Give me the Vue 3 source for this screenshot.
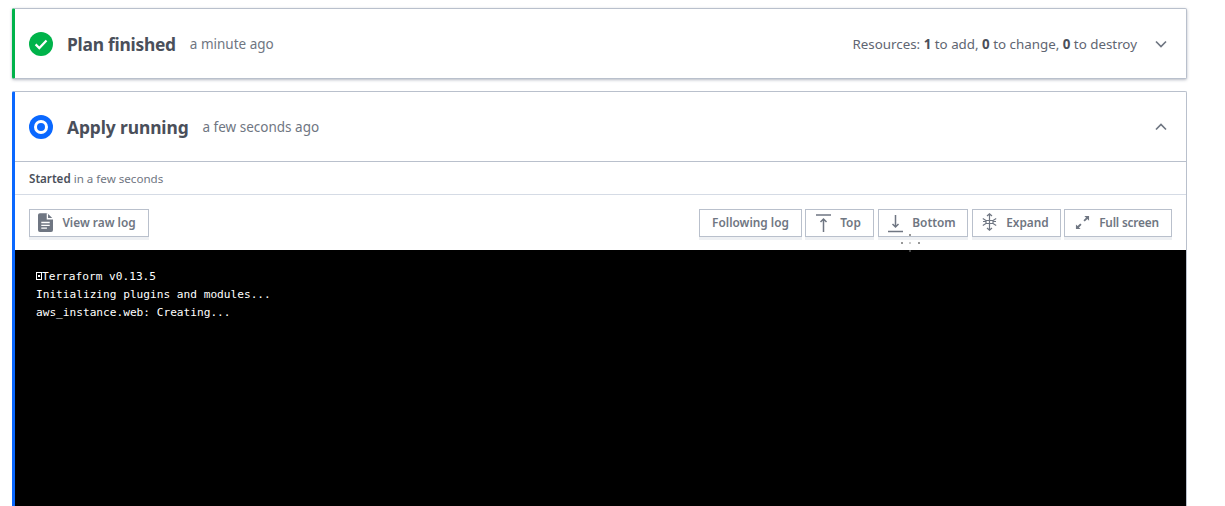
<script setup>
const buttons = [
  { label: 'Following log', width: 103, icon: '' },
  { label: 'Top', width: 69, icon: 'top' },
  { label: 'Bottom', width: 90, icon: 'bottom' },
  { label: 'Expand', width: 89, icon: 'expand' },
  { label: 'Full screen', width: 108, icon: 'full' },
]
</script>

<template>
  <div class="page">
    <section class="card plan">
      <header class="head">
        <svg class="status" width="24" height="24" viewBox="0 0 24 24">
          <circle cx="12" cy="12" r="12" fill="#00b34a" />
          <path d="M6.600 12.400l3.700 3.700 7.200-7.600" fill="none" stroke="#fff" stroke-width="2.200" />
        </svg>
        <h2 class="title title-plan">Plan finished</h2>
        <span class="ago">a minute ago</span>
        <span class="resources">Resources: <b>1</b> to add, <b>0</b> to change, <b>0</b> to destroy</span>
        <svg class="chev" width="12" height="8" viewBox="0 0 12 8">
          <path d="M1 1.500l5 5 5-5" fill="none" stroke="#6f7682" stroke-width="1.700" />
        </svg>
      </header>
    </section>

    <section class="card apply">
      <header class="head head-apply">
        <svg class="status" width="24" height="24" viewBox="0 0 24 24">
          <circle cx="12" cy="12" r="12" fill="#0a68ff" />
          <circle cx="12" cy="12" r="5.500" fill="none" stroke="#fff" stroke-width="3" />
        </svg>
        <h2 class="title">Apply running</h2>
        <span class="ago">a few seconds ago</span>
        <svg class="chev push" width="12" height="8" viewBox="0 0 12 8">
          <path d="M1 6.500l5-5 5 5" fill="none" stroke="#6f7682" stroke-width="1.700" />
        </svg>
      </header>
      <div class="started"><b>Started</b> in a few seconds</div>
      <div class="toolbar">
        <button class="btn raw">
          <svg width="15" height="19" viewBox="0 0 16 20">
            <path d="M2 0h8l6 6v12a2 2 0 0 1-2 2H2a2 2 0 0 1-2-2V2a2 2 0 0 1 2-2z" fill="#6f7682" />
            <path d="M10 0v6h6M3.500 10h9M3.500 13h9M3.500 16h6" fill="none" stroke="#fff" stroke-width="1.400" />
          </svg>
          <span>View raw log</span>
        </button>
        <div class="group">
          <button v-for="b in buttons" :key="b.label" class="btn" :style="{ width: b.width + 'px' }">
            <svg v-if="b.icon === 'top'" class="ico-top" width="15" height="19" viewBox="0 0 15 19">
              <path d="M0 1h15M7.500 18V5M4.500 8L7.500 5l3 3" fill="none" stroke="#6f7682" stroke-width="1.500" />
            </svg>
            <svg v-if="b.icon === 'bottom'" class="ico-bottom" width="15" height="19" viewBox="0 0 15 19">
              <path d="M0 17.500h15M7.500 1v12M4.500 10l3 3 3-3" fill="none" stroke="#6f7682" stroke-width="1.500" />
            </svg>
            <svg v-if="b.icon === 'expand'" width="15" height="18" viewBox="0 0 15 18">
              <path d="M7.500 1v16M5 3l2.500-2.200L10 3M5 15l2.500 2.200L10 15M.8 5.500l3.200 2v3l-3.200 2M14.200 5.500l-3.200 2v3l3.200 2M4 7.500h7M4 10.500h7M1 8.500h2.500M11.500 8.500H14" fill="none" stroke="#6f7682" stroke-width="1.200" />
            </svg>
            <svg v-if="b.icon === 'full'" width="15" height="15" viewBox="0 0 16 16">
              <path d="M10 1h5v5l-1.800-1.800-2.800 2.800-1.400-1.400 2.800-2.800zM6 15H1v-5l1.800 1.800 2.800-2.800 1.400 1.400-2.800 2.800z" fill="#6f7682" />
            </svg>
            <span>{{ b.label }}</span>
          </button>
        </div>
      </div>
      <pre class="log"><span class="ctl"></span>Terraform v0.13.5
Initializing plugins and modules...
aws_instance.web: Creating...</pre>
    </section>
    <svg class="specks" width="20" height="19" viewBox="0 0 20 19">
      <path d="M10 0v2M1 9h2M9.500 9h1M18 9h2" stroke="#333" stroke-width="1" fill="none" />
      <path d="M10 16.500v1" stroke="#fff" stroke-width="1" fill="none" />
    </svg>
  </div>
</template>

<style>
html, body { margin: 0; background: #fff; overflow: hidden; }
</style>

<style scoped>
.page {
  position: relative;
  box-sizing: border-box;
  height: 506px;
  overflow: hidden;
  padding: 8px 38px 0 12px;
  display: flex;
  flex-direction: column;
  gap: 12px;
  font-family: "Noto Sans", "Open Sans", sans-serif;
  color: #6f7682;
}
.card {
  box-sizing: border-box;
  background: #fff;
  border: 1px solid #b9c0cc;
  border-radius: 2px;
}
.plan {
  height: 71px;
  border-left: 3px solid #00b34a;
  box-shadow: 0 1px 3px rgba(90, 100, 120, 0.45);
}
.apply {
  flex: 1;
  border-left: 3px solid #0a68ff;
  border-bottom: 0;
  border-radius: 2px 2px 0 0;
  display: flex;
  flex-direction: column;
}
.head {
  display: flex;
  align-items: center;
  height: 69px;
  padding: 0 19px 0 14px;
}
.head-apply {
  flex: none;
  border-bottom: 1px solid #b9c0cc;
}
.status { flex: none; }
.title {
  margin: 0 0 0 14px;
  font-size: 17.400px;
  font-weight: 700;
  letter-spacing: -0.1px;
  color: #4a4f5a;
}
.title-plan { letter-spacing: -0.25px; }
.ago {
  margin-left: 14px;
  font-size: 13.500px;
  color: #6f7682;
}
.resources {
  margin-left: auto;
  margin-right: 18px;
  font-size: 13.350px;
  color: #5f6672;
}
.resources b { font-weight: 700; color: #4a4f5a; }
.chev { flex: none; }
.push { margin-left: auto; }
.started {
  flex: none;
  box-sizing: border-box;
  height: 33px;
  padding-left: 14px;
  display: flex;
  align-items: center;
  white-space: pre;
  font-size: 11.600px;
  border-bottom: 1px solid #d5dbe5;
}
.started b { font-weight: 600; color: #4a4f5a; }
.toolbar {
  flex: none;
  box-sizing: border-box;
  height: 55px;
  padding: 14px 14px 0 14px;
  display: flex;
  justify-content: space-between;
  align-items: flex-start;
}
.group { display: flex; }
.btn {
  box-sizing: border-box;
  height: 28px;
  padding: 0 2px 2px 0;
  display: flex;
  align-items: center;
  justify-content: center;
  gap: 9px;
  background: #fff;
  border: 1px solid #b9c0cc;
  border-radius: 0;
  box-shadow: 0 3px 0 #eef0f3;
  font-family: inherit;
  font-size: 11.850px;
  font-weight: 600;
  color: #6f7682;
}
.group .btn:nth-child(1) { padding-right: 0; }
.group .btn:nth-child(2),
.group .btn:nth-child(5) { margin-left: 3px; }
.group .btn:nth-child(3),
.group .btn:nth-child(4) { margin-left: 4px; }
.group .btn:nth-child(5) span { letter-spacing: -0.2px; }
.btn svg { flex: none; }
.ico-top, .ico-bottom { position: relative; top: 1px; }
.raw { width: 120px; padding-right: 4px; }
.log {
  flex: 1;
  margin: 0;
  padding: 18px 21px 0;
  background: #000;
  color: #fff;
  font-family: "DejaVu Sans Mono", "Liberation Mono", monospace;
  font-size: 11.150px;
  line-height: 18px;
}
.ctl {
  display: inline-block;
  box-sizing: border-box;
  width: 6px;
  height: 8px;
  border: 1px solid #fff;
  background: radial-gradient(circle, #fff 0 1px, #000 1.200px);
}
.specks {
  position: absolute;
  left: 900px;
  top: 234px;
}
</style>
